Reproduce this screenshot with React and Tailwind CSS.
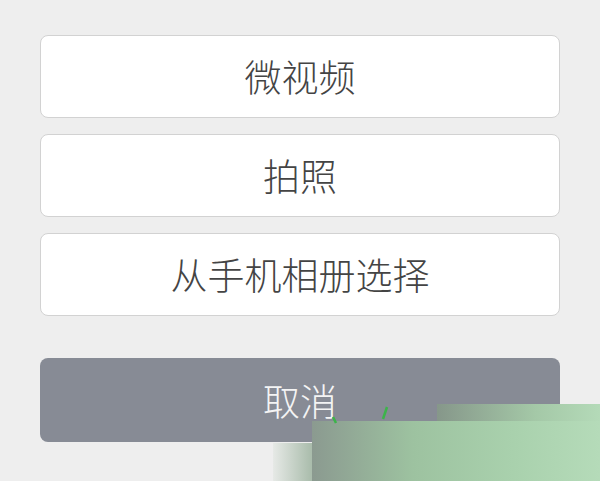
import React from "react";

const options = ["微视频", "拍照", "从手机相册选择"];

export default function App() {
  return (
    <div
      className="relative w-[600px] h-[481px] overflow-hidden bg-[#eeeeee] px-[40px] pt-[35px]"
      style={{ fontFamily: '"Noto Sans CJK SC", "Noto Sans", sans-serif' }}
    >
      <div className="flex flex-col gap-[16px]">
        {options.map((label) => (
          <button
            key={label}
            className="h-[83px] w-full rounded-[8px] border border-[#d2d2d2] bg-white text-[37px] font-light leading-none text-[#444444] flex items-center justify-center"
          >
            {label}
          </button>
        ))}
      </div>

      <button className="mt-[42px] h-[84px] w-full rounded-[8px] bg-[#878b95] text-[37px] font-light leading-none text-[#f4f4f4] flex items-center justify-center">
        取消
      </button>

      {/* watermark overlay bottom right */}
      <div className="absolute left-[437px] top-[404px] right-0 h-[17px] bg-[linear-gradient(to_right,#86978a,#a4c8a7_60%,#b4dab8)]" />
      <div className="absolute left-[312px] top-[421px] right-0 bottom-0 bg-[linear-gradient(to_right,#8b9a90,#9dc2a0_35%,#a9d1ad_70%,#b5dbb9)]" />
      <div className="absolute left-[273px] top-[443px] w-[39px] bottom-0 bg-[linear-gradient(to_right,#e6e9e6,#a9bcab)]" />
      <svg className="absolute left-[325px] top-[405px]" width="70" height="20" viewBox="0 0 70 20">
        <path d="M8 12 L11 18" stroke="#3cb44a" strokeWidth="2.5" fill="none" />
        <path d="M62 2 L58 14" stroke="#3cb44a" strokeWidth="2.5" fill="none" />
      </svg>
    </div>
  );
}
